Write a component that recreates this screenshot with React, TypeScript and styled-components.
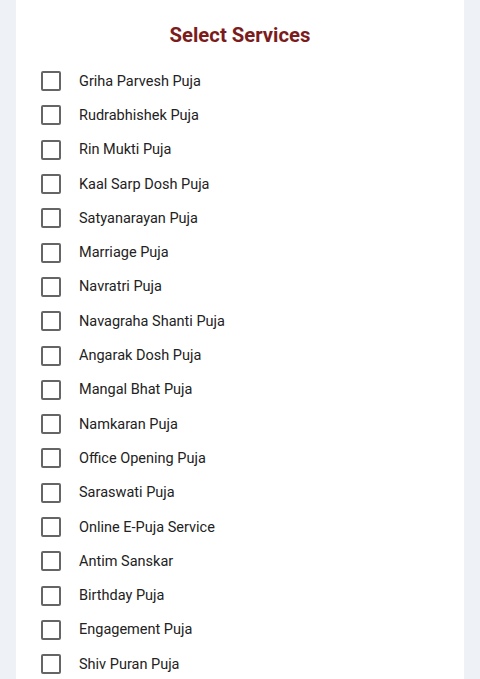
import React, { useState } from 'react';
import styled, { createGlobalStyle } from 'styled-components';

const GlobalStyle = createGlobalStyle`
    body {
        margin: 0;
        background: #eef2f6;
        font-family: Roboto, 'Liberation Sans', sans-serif;
    }
`;

const Page = styled.div`
    padding: 0 16px;
`;

const Card = styled.div`
    background: #ffffff;
    padding: 21px 25px 0;
    min-height: 679px;
    box-sizing: border-box;
`;

const Title = styled.h2`
    margin: 0 0 15px;
    font-size: 20.3px;
    line-height: 28px;
    font-weight: 700;
    color: #7b1c1c;
    text-align: center;
`;

const List = styled.ul`
    list-style: none;
    margin: 0;
    padding: 0;
`;

const Row = styled.li`
    display: flex;
    align-items: center;
    height: 34.3px;
`;

const Label = styled.label`
    display: flex;
    align-items: center;
    gap: 18px;
    cursor: pointer;
    font-size: 14.5px;
    color: #222222;
`;

const Box = styled.span<{ $checked: boolean }>`
    width: 20px;
    height: 20px;
    box-sizing: border-box;
    border: 2px solid #656565;
    border-radius: 2px;
    background: ${(p) => (p.$checked ? '#7b1c1c' : '#fff')};
    border-color: ${(p) => (p.$checked ? '#7b1c1c' : '#656565')};
    display: inline-flex;
    align-items: center;
    justify-content: center;
    flex-shrink: 0;
`;

const HiddenInput = styled.input`
    display: none;
`;

const services = [
    'Griha Parvesh Puja',
    'Rudrabhishek Puja',
    'Rin Mukti Puja',
    'Kaal Sarp Dosh Puja',
    'Satyanarayan Puja',
    'Marriage Puja',
    'Navratri Puja',
    'Navagraha Shanti Puja',
    'Angarak Dosh Puja',
    'Mangal Bhat Puja',
    'Namkaran Puja',
    'Office Opening Puja',
    'Saraswati Puja',
    'Online E-Puja Service',
    'Antim Sanskar',
    'Birthday Puja',
    'Engagement Puja',
    'Shiv Puran Puja',
];

export default function App() {
    const [selected, setSelected] = useState<string[]>([]);

    const toggle = (name: string) =>
        setSelected((s) =>
            s.includes(name) ? s.filter((x) => x !== name) : [...s, name],
        );

    return (
        <Page>
            <GlobalStyle />
            <Card>
                <Title>Select Services</Title>
                <List>
                    {services.map((name) => {
                        const checked = selected.includes(name);
                        return (
                            <Row key={name}>
                                <Label>
                                    <HiddenInput
                                        type="checkbox"
                                        checked={checked}
                                        onChange={() => toggle(name)}
                                    />
                                    <Box $checked={checked}>
                                        {checked && (
                                            <svg width="14" height="14" viewBox="0 0 24 24">
                                                <path
                                                    d="M5 12l5 5 9-10"
                                                    fill="none"
                                                    stroke="#fff"
                                                    strokeWidth="3"
                                                />
                                            </svg>
                                        )}
                                    </Box>
                                    {name}
                                </Label>
                            </Row>
                        );
                    })}
                </List>
            </Card>
        </Page>
    );
}
